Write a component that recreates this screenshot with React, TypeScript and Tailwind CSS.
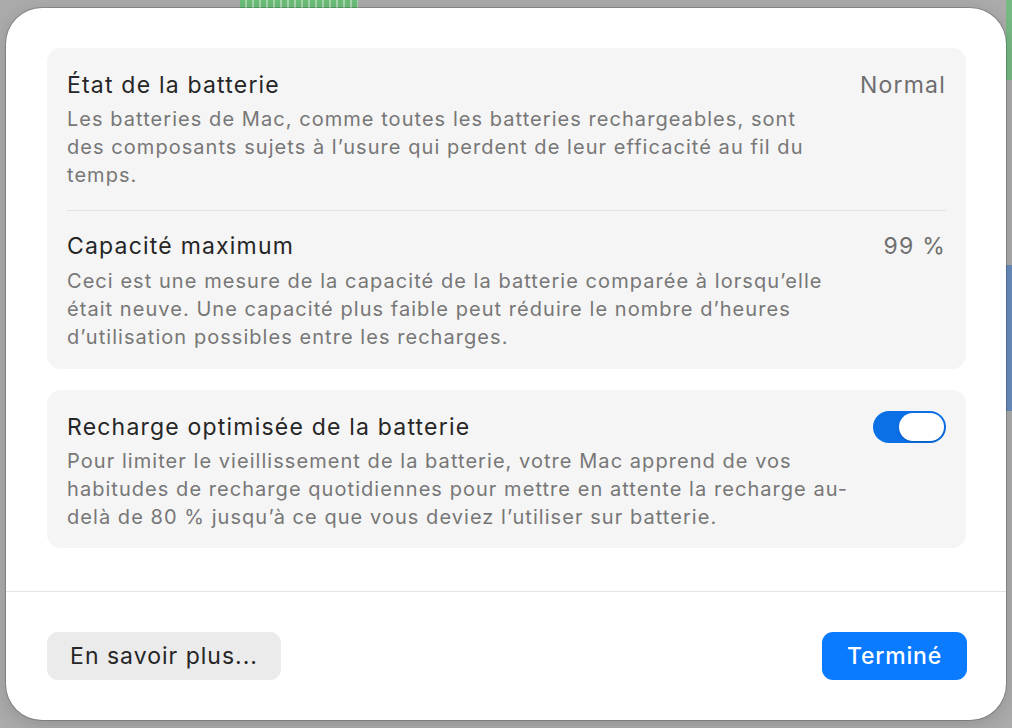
import React, { useState } from 'react'

const font = { fontFamily: 'Inter, "Noto Sans", "Liberation Sans", sans-serif' }

function Toggle({ on, onChange }: { on: boolean; onChange: () => void }) {
  return (
    <button
      onClick={onChange}
      className={
        'flex items-center w-[73px] h-[32px] -my-[2px] rounded-full px-[2px] shrink-0 ' +
        (on ? 'bg-[#0b6fe6] justify-end' : 'bg-[#e2e2e2] justify-start')
      }
    >
      <span className="block w-[45px] h-[28px] rounded-full bg-white shadow-[0_1px_2px_rgba(0,0,0,0.2)]" />
    </button>
  )
}

function Lines({ lines, className }: { lines: string[]; className: string }) {
  return (
    <div className={'text-[20px] leading-[28px] tracking-[1.05px] text-[#777777] ' + className}>
      {lines.map(l => (
        <div key={l} className="whitespace-nowrap">{l}</div>
      ))}
    </div>
  )
}

function Row({ title, children }: { title: string; children: React.ReactNode }) {
  return (
    <div className="flex items-center justify-between h-[28px] text-[23px] leading-[28px] tracking-[1.2px]">
      <span className="text-[#262626]">{title}</span>
      {children}
    </div>
  )
}

export default function App() {
  const [optimized, setOptimized] = useState(true)

  return (
    <div className="relative w-full h-[728px] bg-[#ababab] px-[6px] pt-[8px] pb-[8px] overflow-hidden" style={font}>
      {/* window behind the sheet */}
      <div className="absolute left-[240px] top-0 w-[118px] h-[8px] bg-[repeating-linear-gradient(90deg,#6cbd79_0px,#6cbd79_5px,#a9d6ae_5px,#a9d6ae_7px)]" />
      <div className="absolute right-0 top-0 w-[6px] h-[80px] bg-[#76b983]" />
      <div className="absolute right-0 top-[265px] w-[6px] h-[146px] bg-[#6a8dbd]" />

      <div className="relative h-full flex flex-col bg-white rounded-[36px] shadow-[0_0_0_1px_rgba(0,0,0,0.18),0_4px_18px_rgba(0,0,0,0.15)]">
        <div className="flex flex-col gap-[21px] pt-[40px] pl-[41px] pr-[40px]">
          {/* Battery state card */}
          <div className="bg-[#f5f5f5] rounded-[14px] px-[20px] pt-[23px] pb-[18px]">
            <Row title="État de la batterie">
              <span className="text-[#6e6e6e]">Normal</span>
            </Row>
            <Lines
              className="mt-[6px]"
              lines={[
                'Les batteries de Mac, comme toutes les batteries rechargeables, sont',
                'des composants sujets à l’usure qui perdent de leur efficacité au fil du',
                'temps.',
              ]}
            />
            <div className="h-px bg-[#e2e2e2] mt-[21px] mb-[21px]" />
            <Row title="Capacité maximum">
              <span className="text-[#6e6e6e]">99 %</span>
            </Row>
            <Lines
              className="mt-[7px]"
              lines={[
                'Ceci est une mesure de la capacité de la batterie comparée à lorsqu’elle',
                'était neuve. Une capacité plus faible peut réduire le nombre d’heures',
                'd’utilisation possibles entre les recharges.',
              ]}
            />
          </div>

          {/* Optimized charging card */}
          <div className="bg-[#f5f5f5] rounded-[14px] px-[20px] pt-[23px] pb-[17px]">
            <Row title="Recharge optimisée de la batterie">
              <Toggle on={optimized} onChange={() => setOptimized(v => !v)} />
            </Row>
            <Lines
              className="mt-[6px]"
              lines={[
                'Pour limiter le vieillissement de la batterie, votre Mac apprend de vos',
                'habitudes de recharge quotidiennes pour mettre en attente la recharge au-',
                'delà de 80 % jusqu’à ce que vous deviez l’utiliser sur batterie.',
              ]}
            />
          </div>
        </div>

        <div className="h-px bg-[#e4e4e4] mt-[43px]" />

        {/* Footer */}
        <div className="flex items-center justify-between pt-[40px] pl-[41px] pr-[39px]">
          <button className="w-[234px] h-[48px] rounded-[11px] bg-[#ebebeb] text-[23px] tracking-[1px] text-[#262626]">
            En savoir plus...
          </button>
          <button className="w-[145px] h-[48px] rounded-[11px] bg-[#0a7aff] text-[23px] tracking-[0.8px] font-medium text-white">
            Terminé
          </button>
        </div>
      </div>
    </div>
  )
}
